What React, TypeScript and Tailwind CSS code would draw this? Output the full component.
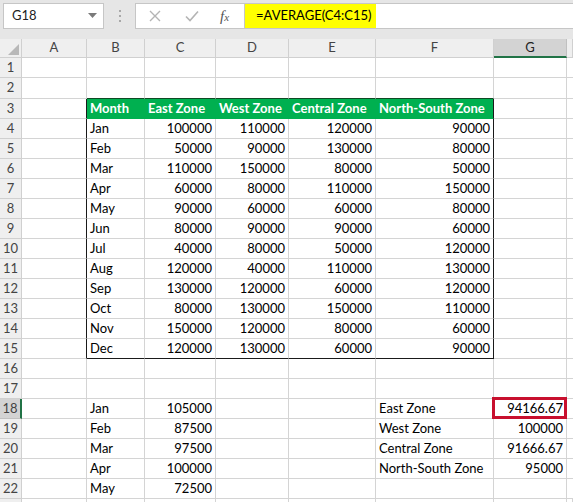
import { Fragment } from 'react';

type Val = string | number | null;

const COLS = ['A', 'B', 'C', 'D', 'E', 'F', 'G', ''];
const WIDTHS = ['w-[65px]', 'w-[58px]', 'w-[71px]', 'w-[73px]', 'w-[87px]', 'w-[118px]', 'w-[73px]', 'flex-1'];

const HEADERS = ['Month', 'East Zone', 'West Zone', 'Central Zone', 'North-South Zone'];

const SALES: [string, number, number, number, number][] = [
  ['Jan', 100000, 110000, 120000, 90000],
  ['Feb', 50000, 90000, 130000, 80000],
  ['Mar', 110000, 150000, 80000, 50000],
  ['Apr', 60000, 80000, 110000, 150000],
  ['May', 90000, 60000, 60000, 80000],
  ['Jun', 80000, 90000, 90000, 60000],
  ['Jul', 40000, 80000, 50000, 120000],
  ['Aug', 120000, 40000, 110000, 130000],
  ['Sep', 130000, 120000, 60000, 120000],
  ['Oct', 80000, 130000, 150000, 110000],
  ['Nov', 150000, 120000, 80000, 60000],
  ['Dec', 120000, 130000, 60000, 90000],
];

const MONTH_AVG: [string, number][] = [
  ['Jan', 105000],
  ['Feb', 87500],
  ['Mar', 97500],
  ['Apr', 100000],
  ['May', 72500],
];

const ZONE_AVG: [string, string][] = [
  ['East Zone', '94166.67'],
  ['West Zone', '100000'],
  ['Central Zone', '91666.67'],
  ['North-South Zone', '95000'],
];

// builds the values of row n, one entry per column A..H
function rowValues(n: number): Val[] {
  const vals: Val[] = Array(8).fill(null);
  if (n === 3) HEADERS.forEach((h, i) => (vals[1 + i] = h));
  if (n >= 4 && n <= 15) SALES[n - 4].forEach((v, i) => (vals[1 + i] = v));
  if (n >= 18 && n <= 22) {
    const [m, v] = MONTH_AVG[n - 18];
    vals[1] = m;
    vals[2] = v;
  }
  if (n >= 18 && n <= 21) {
    const [z, v] = ZONE_AVG[n - 18];
    vals[5] = z;
    vals[6] = v;
  }
  return vals;
}

function Cell({ row, col, value }: { row: number; col: number; value: Val }) {
  const inTable = row >= 3 && row <= 15;
  const head = row === 3 && col >= 1 && col <= 5;
  const numeric = typeof value === 'number' || (col === 6 && value !== null);

  let right = 'border-r-[#d4d4d4]';
  if (inTable && (col === 0 || col === 5)) right = 'border-r-[#1a1a1a]';
  else if (head) right = 'border-r-[#00b050]';

  let bottom = 'border-b-[#d4d4d4]';
  if (row === 2 && col >= 1 && col <= 5) bottom = 'border-b-[#0f4a24]';
  else if (row === 15 && col >= 1 && col <= 5) bottom = 'border-b-[#1a1a1a]';
  else if (head) bottom = 'border-b-[#00b050]';

  return (
    <div
      className={`relative flex h-full shrink-0 items-center overflow-visible whitespace-nowrap border-r border-b px-[3px] ${WIDTHS[col]} ${right} ${bottom} ${
        head ? 'bg-[#00b050] font-bold text-white' : 'bg-white text-black'
      } ${numeric ? 'justify-end' : 'justify-start'}`}
    >
      {value}
      {row === 18 && col === 6 && (
        <div className="pointer-events-none absolute -top-[2px] -left-[2px] -right-[1px] -bottom-[1px] border-[3px] border-[#c8102e]" />
      )}
    </div>
  );
}

function FormulaBar() {
  return (
    <div className="flex h-[39px] items-start bg-[#e6e6e6] pt-[3px]">
      <div className="ml-[3px] flex h-[26px] w-[101px] items-center justify-between border border-[#c6c6c6] bg-white pr-[6px] pl-[8px] text-[#222]">
        <span>G18</span>
        <svg width="9" height="6" viewBox="0 0 9 6">
          <polygon points="0,0 9,0 4.5,5" fill="#7a7a7a" />
        </svg>
      </div>
      <div className="flex w-[31px] flex-col items-center justify-center gap-[3px] pt-[7px]">
        <span className="h-[2px] w-[2px] bg-[#a8a8a8]" />
        <span className="h-[2px] w-[2px] bg-[#a8a8a8]" />
        <span className="h-[2px] w-[2px] bg-[#a8a8a8]" />
      </div>
      <div className="flex h-[26px] w-[110px] items-center border border-[#c6c6c6] bg-white">
        <svg className="ml-[13px]" width="12" height="12" viewBox="0 0 12 12">
          <path d="M1 1 L11 11 M11 1 L1 11" stroke="#b4b4b4" strokeWidth="1.4" fill="none" />
        </svg>
        <svg className="ml-[24px]" width="14" height="12" viewBox="0 0 14 12">
          <path d="M1 6.5 L5 10.5 L13 1.5" stroke="#b4b4b4" strokeWidth="1.6" fill="none" />
        </svg>
        <span className="ml-[21px] font-['Liberation_Serif',serif] text-[15px] text-[#555] italic">
          f<span className="text-[11px]">x</span>
        </span>
      </div>
      <div className="flex h-[26px] flex-1 items-center border-y border-[#c6c6c6] bg-white">
        <div className="flex h-full items-center bg-[#ffff00] pr-[4px] pl-[11px] text-black">=AVERAGE(C4:C15)</div>
      </div>
    </div>
  );
}

export default function App() {
  const rows = Array.from({ length: 22 }, (_, i) => i + 1);

  return (
    <div className="h-[502px] w-[573px] overflow-hidden bg-white font-['Lato',sans-serif] text-[13px]">
      <FormulaBar />

      {/* column letters */}
      <div className="flex h-[19px] bg-[#efefef] text-[#444]">
        <div className="flex w-[22px] shrink-0 items-end justify-end border-r border-b border-[#d0d0d0] p-[2px]">
          <svg width="11" height="11" viewBox="0 0 11 11">
            <polygon points="11,0 11,11 0,11" fill="#b8b8b8" />
          </svg>
        </div>
        {COLS.map((c, i) => (
          <div
            key={i}
            className={`flex shrink-0 items-center justify-center border-r ${WIDTHS[i]} ${
              c === 'G' ? 'border-b-2 border-r-[#c0c0c0] border-b-[#217346] bg-[#d3d3d3] text-[#222]' : 'border-b border-[#d0d0d0]'
            }`}
          >
            {c}
          </div>
        ))}
      </div>

      {rows.map((n) => (
        <div key={n} className={`flex ${n === 2 ? 'h-[21px]' : 'h-[20px]'}`}>
          <div
            className={`flex w-[22px] shrink-0 items-center justify-center border-b text-[#444] ${
              n === 18
                ? 'border-r-2 border-r-[#217346] border-b-[#c0c0c0] bg-[#d3d3d3]'
                : 'border-r border-[#d0d0d0] bg-[#efefef]'
            }`}
          >
            {n}
          </div>
          {rowValues(n).map((v, c) => (
            <Fragment key={c}>
              <Cell row={n} col={c} value={v} />
            </Fragment>
          ))}
        </div>
      ))}

      {/* next row, cut by the window edge */}
      <div className="flex h-[20px]">
        <div className="w-[22px] shrink-0 border-r border-[#d0d0d0] bg-[#efefef]" />
        {WIDTHS.map((w, c) => (
          <div key={c} className={`h-full shrink-0 border-r border-[#d4d4d4] ${w}`} />
        ))}
      </div>
    </div>
  );
}
